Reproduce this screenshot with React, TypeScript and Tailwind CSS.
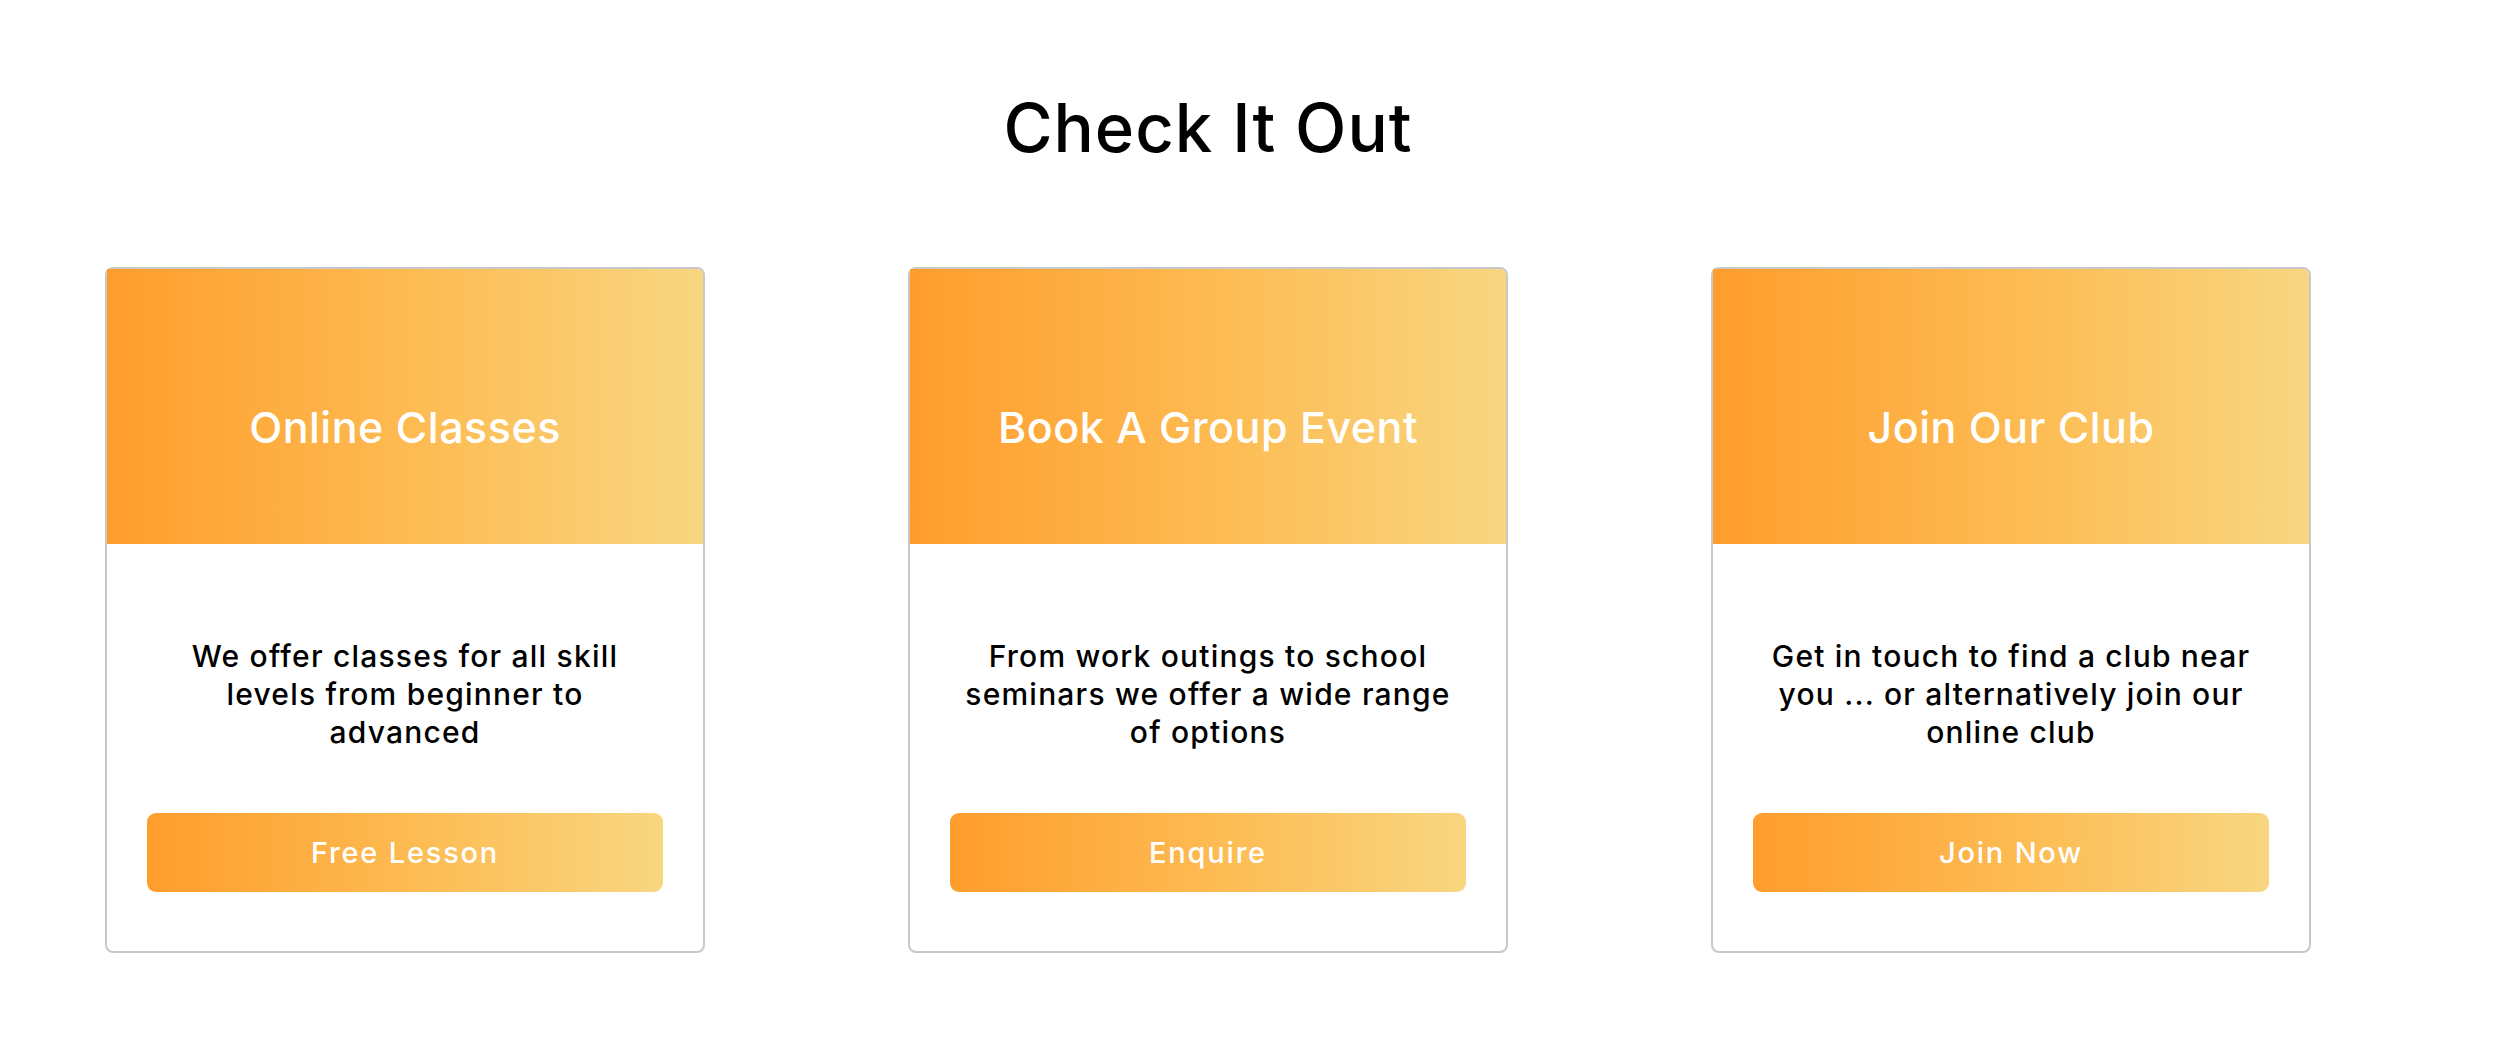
import React from "react";

const font = { fontFamily: 'Inter, "Noto Sans", sans-serif' };

type CardProps = { title: string; lines: string[]; button: string };

function Card({ title, lines, button }: CardProps) {
  return (
    <div className="w-[600px] border-2 border-[#c8c8c8] rounded-[8px] bg-white flex flex-col">
      <div className="h-[275px] rounded-tr-[6px] bg-[linear-gradient(to_right,#ff9d2c,#fdbd55_55%,#f8d681)] flex justify-center pt-[132px]">
        <div className="text-white text-[43px] leading-[52px] font-medium tracking-[0.5px]">{title}</div>
      </div>
      <div className="flex flex-col items-center pt-[93px] pb-[59px]">
        <div className="text-black text-[30px] leading-[38px] font-medium text-center tracking-[1.2px]">
          {lines.map((l, i) => (
            <div key={i}>{l}</div>
          ))}
        </div>
        <button className="mt-[62px] w-[516px] h-[79px] rounded-[9px] bg-[linear-gradient(to_right,#ff9d2c,#fdbd55_55%,#f8d681)] text-white text-[29px] font-medium tracking-[1.8px]">
          {button}
        </button>
      </div>
    </div>
  );
}

export default function App() {
  return (
    <div className="w-[2498px] h-[1060px] bg-white" style={font}>
      <div className="pl-[105px] w-[2311px] flex flex-col">
        <h1 className="mt-[94px] text-center text-black text-[67px] leading-[67px] font-medium tracking-[1px]">
          Check It Out
        </h1>
        <div className="mt-[106px] flex gap-[203px]">
          <Card
            title="Online Classes"
            lines={["We offer classes for all skill", "levels from beginner to", "advanced"]}
            button="Free Lesson"
          />
          <Card
            title="Book A Group Event"
            lines={["From work outings to school", "seminars we offer a wide range", "of options"]}
            button="Enquire"
          />
          <Card
            title="Join Our Club"
            lines={["Get in touch to find a club near", "you ... or alternatively join our", "online club"]}
            button="Join Now"
          />
        </div>
      </div>
    </div>
  );
}
